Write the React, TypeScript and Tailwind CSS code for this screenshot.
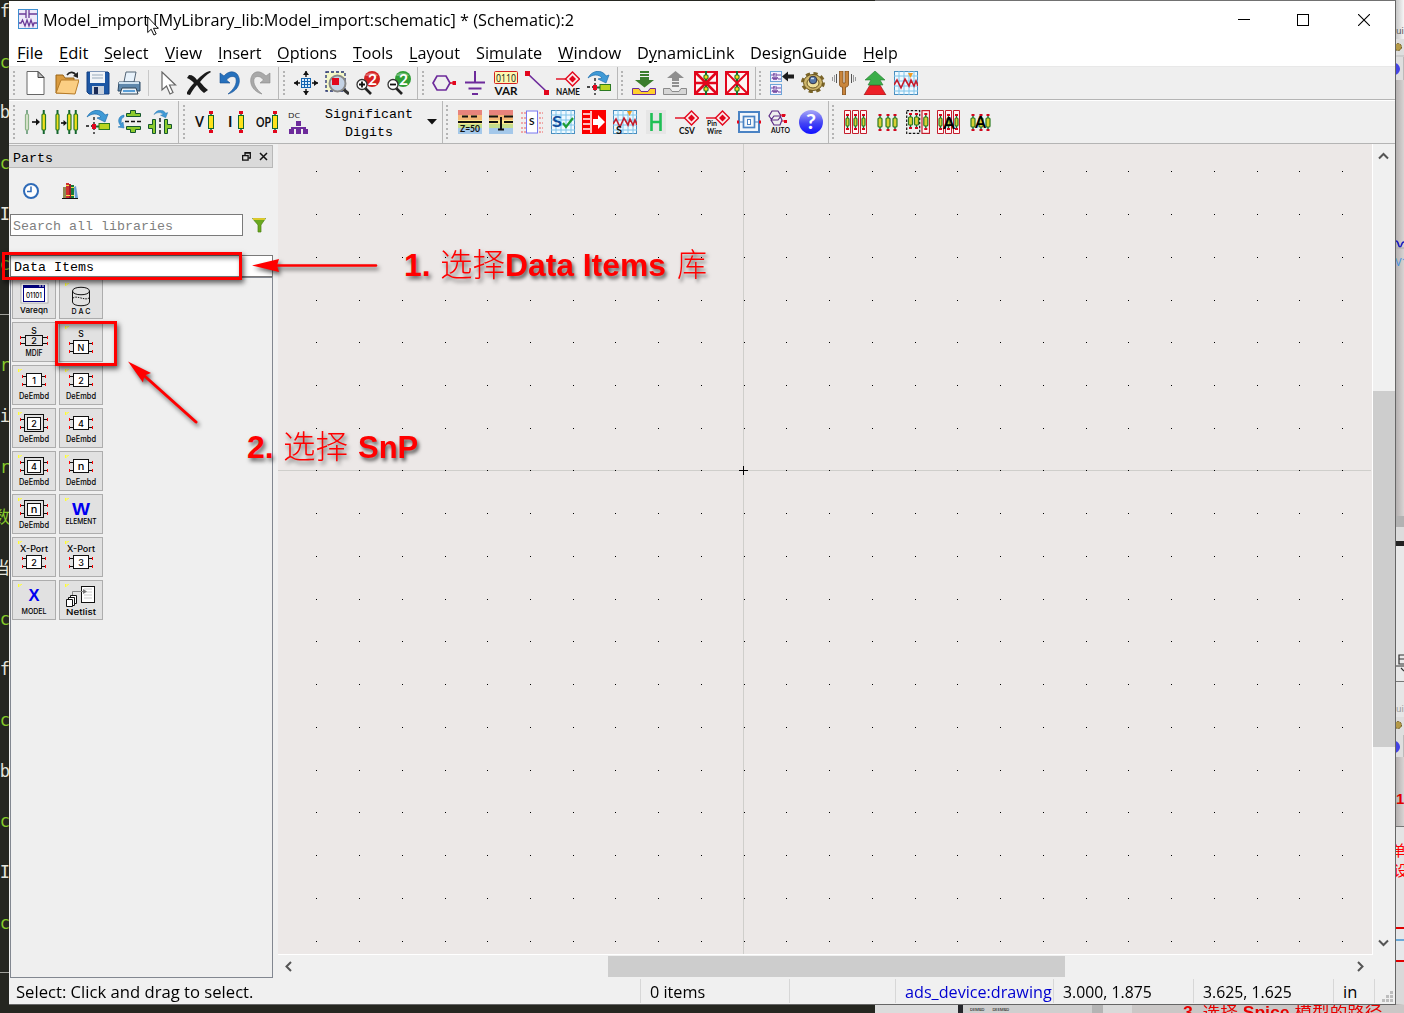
import React, { useLayoutEffect, useRef, useState } from "react";

/* Single-line text squeezed horizontally to an exact width. */
function Fit({ w, className = "", children }: { w: number; className?: string; children: React.ReactNode }) {
  const ref = useRef<HTMLSpanElement>(null);
  const [k, setK] = useState(1);
  useLayoutEffect(() => {
    if (ref.current) setK(w / ref.current.offsetWidth);
  }, [w]);
  return (
    <span className={"block shrink-0 whitespace-nowrap " + className} style={{ width: w }}>
      <span ref={ref} className="inline-block origin-left" style={{ transform: `scaleX(${k})` }}>
        {children}
      </span>
    </span>
  );
}

function Ico({ children, w = 24, h = 24, className = "" }: { children: React.ReactNode; w?: number; h?: number; className?: string }) {
  return (
    <svg width={w} height={h} viewBox={`0 0 ${w} ${h}`} className={"block shrink-0 " + className}>
      {children}
    </svg>
  );
}

function Grip({ n, className = "" }: { n: number; className?: string }) {
  return (
    <span className={"flex shrink-0 flex-col justify-between " + className}>
      {Array.from({ length: n }, (_, i) => (
        <i key={i} className="block size-[2px] bg-[#b4b4b4]" />
      ))}
    </span>
  );
}

/* Resistor body with leads, red pins optional. */
function Res({ x, y = 0, h = 24, w = 5, red = false, fade = false }: { x: number; y?: number; h?: number; w?: number; red?: boolean; fade?: boolean }) {
  const c = x + w / 2;
  return (
    <g opacity={fade ? 0.5 : 1}>
      <path d={`M${c} ${y}V${y + h}`} stroke="#14662e" strokeWidth={red ? 1.4 : 2} />
      {red && <path d={`M${c - 1.5} ${y + 1}h3M${c - 1.5} ${y + h - 1}h3`} stroke="#d2061c" strokeWidth="2" />}
      <rect x={x + 0.5} y={y + 4} width={w - 1} height={h - 8} rx="1" fill={fade ? "#c8dcb0" : red ? "#d8d032" : "#f2e01a"} stroke="#2b7a22" strokeWidth="1.2" />
    </g>
  );
}

/* Larger pinned resistor used beside a letter. */
function Probe({ x }: { x: number }) {
  return (
    <>
      <path d={`M${x + 3} 2V22`} stroke="#14662e" strokeWidth="1.500" />
      <path d={`M${x + 1} 2.500h4M${x + 1} 21.500h4`} stroke="#e2061c" strokeWidth="3" />
      <rect x={x + 0.5} y={5.500} width="5" height="13" fill="#ffe21a" stroke="#14662e" />
    </>
  );
}

const Arc = ({ dx = 0, dy = 0, s = 1 }: { dx?: number; dy?: number; s?: number }) => (
  <g transform={`translate(${dx} ${dy}) scale(${s})`}>
    <path d="M0 7C4-1 14-2 18 5l3-1-3 8-8-4 4-1C11 3 5 3 0 7z" fill="#3f9ad6" stroke="#1f6fae" strokeWidth=".7" />
  </g>
);

const Grid = () => (
  <>
    <rect x=".5" y=".5" width="23" height="23" fill="#eef9ff" stroke="#4a8fc0" />
    <path d="M5 0V24M10 0V24M15 0V24M20 0V24M0 5H24M0 10H24M0 15H24M0 20H24" stroke="#7fc4ea" strokeWidth="1" />
  </>
);

const Move = () => (
  <>
    <Arc dx={1} />
    <path d="M8 7V24M0 16H6" stroke="#111" strokeWidth="1.3" strokeDasharray="3 2" />
    <rect x="6" y="14" width="4" height="5" fill="#e2061c" />
    <path d="M10 16.500H13" stroke="#14662e" strokeWidth="2" />
    <rect x="13" y="13.500" width="10.500" height="6" fill="#b9d520" stroke="#2b7a22" />
  </>
);

const Diamond = () => (
  <>
    <path d="M0 8H13" stroke="#e2061c" strokeWidth="1.4" />
    <path d="M16.500 1l7 7-7 7-7-7z" fill="#fbe9e9" stroke="#e2061c" strokeWidth="1.4" />
    <path d="M16.500 4.500l3.500 3.500-3.500 3.500-3.500-3.500z" fill="#e2061c" />
  </>
);

const Sheet = ({ y }: { y: number }) => (
  <g transform={`translate(0 ${y})`}>
    <rect x=".5" y=".5" width="11" height="10" fill="#f4f0ff" stroke="#6fa6d8" />
    <path d="M1 4h3V2M4 2v4M6 2v4M6 4h5M2 8l1-2 1 3 1-3 1 3 1-3 1 2h3" fill="none" stroke="#6a3a98" strokeWidth=".9" />
  </g>
);

const Wave = () => <path d="M0 14l3-5 4 8 4-9 4 7 2-6 3 6 2-5 2 5" fill="none" stroke="#c51c2c" strokeWidth="1.6" />;

const Bars = () => (
  <>
    <rect width="24" height="6" fill="#e8837c" />
    <rect y="5" width="24" height="5" fill="#f5b877" />
    <rect y="10" width="24" height="4" fill="#fbe98c" />
    <rect y="14" width="24" height="4" fill="#c5de8c" />
    <rect y="18" width="24" height="6" fill="#a4c8ea" />
  </>
);

const T = ({ x, y, s, children, fill = "#111", w, anchor = "start", bold = false }: { x: number; y: number; s: number; children: string; fill?: string; w?: number; anchor?: "start" | "middle"; bold?: boolean }) => (
  <text x={x} y={y} fontSize={s} fill={fill} textLength={w} lengthAdjust="spacingAndGlyphs" textAnchor={anchor} className={bold ? "font-['Lato'] font-bold" : "font-['Open_Sans'] font-medium"}>
    {children}
  </text>
);

const Lens = ({ c, d, sign }: { c: string; d: string; sign: string }) => (
  <>
    <circle cx="16" cy="8" r="8" fill={c} />
    <path d="M9 5a7 5 0 0 1 13 0z" fill="#fff" opacity=".3" />
    <T x={12} y={13.500} s={15} w={9} fill="#fff" bold>{d}</T>
    <path d="M9 17l6 6" stroke="#222" strokeWidth="2.600" />
    <circle cx="6" cy="13.500" r="5" fill="#fff" stroke="#333" strokeWidth="1.300" />
    <path d={sign} stroke="#111" strokeWidth="1.800" />
  </>
);

const Cross = ({ mid }: { mid: boolean }) => (
  <>
    <rect x="1" y="1" width="22" height="22" fill="#fdf5f5" stroke="#e2061c" strokeWidth="2" />
    <Res x={9.5} y={0} h={12} />
    <Res x={9.5} y={12} h={12} />
    <path d={mid ? "M1 1L23 23M23 1L1 23M0 12H24" : "M1 1L23 23M23 1L1 23"} stroke="#e2061c" strokeWidth={mid ? 2.6 : 2} />
  </>
);

const Trio = () => (
  <>
    <Res x={2.500} y={4} h={17} red />
    <Res x={10.500} y={4} h={17} red />
    <Res x={17.500} y={4} h={17} red />
  </>
);

const Boxes3 = () => (
  <>
    <path d="M.500 .500h6v23h-6zM8.500 .500h6v23h-6zM16.500 .500h6v23h-6z" fill="#fff4f4" stroke="#c51c2c" strokeWidth="1" />
    <Res x={1.500} y={4} h={16} w={4} red />
    <Res x={9.500} y={4} h={16} w={4} red />
    <Res x={17.500} y={4} h={16} w={4} red />
  </>
);

function ToolbarTop() {
  const sec = "flex h-full shrink-0 items-center gap-[7px] border-r border-[#b8b8b8]";
  return (
    <div className="flex h-[33px] shrink-0 border-b border-[#b4b4b4] bg-[#efefef]">
      <div className={sec + " w-[270px] pl-[4px]"}>
        <Grip n={6} className="mr-[2px] h-[25px]" />
        <Ico>
          <path d="M3 .500h11l6 6v17H3z" fill="#fff" stroke="#666" />
          <path d="M14 .500l6 6h-6z" fill="#bbb" stroke="#444" />
        </Ico>
        <Ico>
          <path d="M1 22V4h7l2 3h9v15z" fill="#d99a3e" stroke="#9a6416" />
          <path d="M1 22L6 9h18l-4 14z" fill="#fbce83" stroke="#b67b28" />
          <path d="M12 4c3-4 7-3 9 0" fill="none" stroke="#222" strokeWidth="1.600" />
          <path d="M23 1v6l-5-2z" fill="#222" />
        </Ico>
        <Ico>
          <path d="M1 1h21l1 1v21H3l-2-2z" fill="#1c57a5" stroke="#123f80" />
          <rect x="4" y="1" width="15" height="11" fill="#f1f4f8" />
          <path d="M6 4h11M6 7h11" stroke="#9ab" />
          <rect x="6" y="15" width="12" height="8" fill="#c8d0dc" />
          <rect x="8" y="16" width="4" height="7" fill="#1a2a55" />
        </Ico>
        <Ico>
          <path d="M7 11L9 1h10l-2 10z" fill="#e8f2fb" stroke="#567" />
          <path d="M2 11h21v9H1z" fill="#5f88ac" stroke="#2d4a66" />
          <path d="M2 12h20" stroke="#cfe2f0" strokeWidth="2" />
          <path d="M5 17h14l2 6H3z" fill="#e6f0f8" stroke="#345" />
          <path d="M6 20h12" stroke="#5a9fd8" strokeWidth="2" />
        </Ico>
        <i className="h-[26px] w-px bg-[#c8c8c8]" />
        <Ico>
          <path d="M6 1v18l4.500-4 3.500 8 3-1.500-3.500-7.500h6z" fill="#fff" stroke="#666" strokeWidth="1.200" />
        </Ico>
        <Ico>
          <path d="M2 4c4 0 6 2 8 5 4-4 8-8 13-9l1 1c-5 3-8 6-11 10 3 3 5 6 8 8l-4 3c-3-2-5-5-7-8-3 3-5 6-7 10l-4-1c2-4 5-8 8-11-2-2-4-4-7-5z" fill="#1a1a1a" />
        </Ico>
        <Ico>
          <path d="M2 2v10h10L8.500 9C12 4 18 5 18 8c1 5-2 10-8 15 11-3 14-14 9-20-4-4-10-2-13 2z" fill="#2671bd" stroke="#164f90" strokeWidth=".6" />
        </Ico>
        <Ico>
          <path d="M21 2v10H11l3.500-3C11 4 6 5 5 8c-1 5 2 10 8 15C2 20-1 9 4 3c4-4 9-2 13 2z" fill="#a9a9a9" stroke="#8a8a8a" strokeWidth=".6" />
        </Ico>
      </div>
      <div className={sec + " w-[139px] pl-[4px]"}>
        <Grip n={6} className="mr-[2px] h-[25px]" />
        <Ico>
          <rect x="7.500" y="7.500" width="9" height="9" fill="#d8ecfb" stroke="#1464b0" />
          <path d="M10.500 7v10M13.500 7v10M7 10.500h10M7 13.500h10" stroke="#1464b0" />
          <path d="M12 0v6M12 18v6M0 12h6M18 12h6" stroke="#111" strokeWidth="1.400" />
          <path d="M12 0l3 4H9zM12 24l3-4H9zM0 12l4-3v6zM24 12l-4-3v6z" fill="#111" />
        </Ico>
        <Ico>
          <rect x="1" y="1" width="19" height="19" fill="#f4f7c8" stroke="#22306e" strokeDasharray="3 2" strokeWidth="1.300" />
          <path d="M18 18l6 5" stroke="#333" strokeWidth="3" />
          <circle cx="12.500" cy="12.500" r="8" fill="#c4d2e4" stroke="#888" strokeWidth="2" />
          <path d="M14 14V7H7V14z" fill="#e2061c" />
        </Ico>
        <Ico><Lens c="#d42020" d="2" sign="M3 13.500h6M6 10.500v6" /></Ico>
        <Ico><Lens c="#2f9e35" d="2" sign="M3 13.500h6" /></Ico>
      </div>
      <div className={sec + " w-[200px] pl-[4px]"}>
        <Grip n={6} className="mr-px h-[25px]" />
        <Ico>
          <path d="M5 5h9l4 7-4 7H5L1 12z" fill="none" stroke="#6d2b9b" strokeWidth="1.700" />
          <path d="M18 12h4" stroke="#e2061c" strokeWidth="1.500" />
          <rect x="20.500" y="10" width="3.500" height="4" fill="#e2061c" />
        </Ico>
        <Ico>
          <path d="M12 0v11M2 11.500h20M5.500 17.500h13M9 23h6" stroke="#6d2b9b" strokeWidth="2" />
        </Ico>
        <Ico>
          <rect x=".5" y=".5" width="23" height="12" rx="1" fill="#fdf8b0" stroke="#d42020" />
          <T x={2} y={10.500} s={10.500} w={20}>0110</T>
          <T x={0.500} y={23.500} s={11.500} w={23} bold>VAR</T>
        </Ico>
        <Ico>
          <path d="M3 3L22 21" stroke="#6d2b9b" strokeWidth="1.700" />
          <path d="M0 0h5v5H0zM19 19h5v5h-5z" fill="#e2061c" />
        </Ico>
        <Ico>
          <Diamond />
          <T x={0} y={24} s={9} w={24} bold>NAME</T>
        </Ico>
        <Ico><Move /></Ico>
      </div>
      <div className={sec + " w-[138px] pl-[3px]"}>
        <Grip n={6} className="mr-[2px] h-[25px]" />
        <Ico>
          <path d="M8 0h9v2H8zM8 3h9v2H8zM8 6h9v3h5l-9.500 7.500L3 9h5z" fill="#3a7d2c" />
          <path d="M.500 17.500H7l2 3h7l2-3h5.500v6H.500z" fill="#ffcf2e" stroke="#6d2b9b" />
        </Ico>
        <Ico>
          <path d="M9 16h7v-2H9zM9 13h7v-2H9zM9 10V7H4l8.500-7L21 7h-5v3z" fill="#8f8f8f" />
          <path d="M.500 17.500H7l2 3h7l2-3h5.500v6H.500z" fill="#d6d6d6" stroke="#8a8a8a" />
        </Ico>
        <Ico><Cross mid /></Ico>
        <Ico><Cross mid={false} /></Ico>
      </div>
      <div className="flex items-center gap-[7px] pl-[3px]">
        <Grip n={6} className="mr-[2px] h-[25px]" />
        <Ico>
          <Sheet y={0} />
          <Sheet y={13} />
          <path d="M12 5.500l6-5v3h6v4h-6v3z" fill="#1c1c1c" />
        </Ico>
        <Ico>
          <ellipse cx="12" cy="11.500" rx="10" ry="8.500" fill="none" stroke="#7a6428" strokeWidth="4" strokeDasharray="4 3.300" />
          <ellipse cx="12" cy="11.500" rx="9.500" ry="8" fill="#cdb56a" stroke="#6b5720" />
          <ellipse cx="12" cy="12" rx="6" ry="5" fill="#efe09a" stroke="#6b5720" />
          <circle cx="12" cy="9" r="3.800" fill="#5577a8" stroke="#334" />
          <path d="M10 7.500h3" stroke="#cde" strokeWidth="1.500" />
        </Ico>
        <Ico>
          <path d="M7.500 0v13c0 3 2 3 3 3v8h3v-8c1 0 3 0 3-3V0h-3.500v12h-2V0z" fill="#c9853c" stroke="#7d4b16" strokeWidth=".8" />
          <path d="M4.500 3v9M19.500 3v9" stroke="#555" /><path d="M2.500 4v7M21.500 4v7M.500 6v4M23.500 6v4" stroke="#999" />
        </Ico>
        <Ico>
          <path d="M1 24L7 14h10l6 10z" fill="#ec2027" stroke="#8b1a1a" strokeWidth=".6" />
          <path d="M12 0l10 9h-5l3 5H5l3-5H2z" fill="#3bae49" stroke="#257a30" strokeWidth=".6" />
        </Ico>
        <Ico>
          <Grid />
          <Wave />
          <path d="M14 2h5l-2.500 5z" fill="#f39a1d" />
        </Ico>
      </div>
    </div>
  );
}

function ToolbarBottom() {
  const sec = "flex h-full shrink-0 items-center gap-[7px] border-r border-[#b8b8b8]";
  return (
    <div className="flex h-[44px] shrink-0 border-b border-t border-b-[#b4b4b4] border-t-white bg-[#efefef]">
      <div className={sec + " w-[170px] pl-[4px]"}>
        <Grip n={8} className="mr-[2px] h-[35px]" />
        <Ico>
          <Res x={1} w={4} fade /><Res x={17.500} w={4.500} />
          <path d="M8 12h6" stroke="#111" strokeWidth="1.600" /><path d="M12 8.500l4 3.500-4 3.500z" fill="#111" />
        </Ico>
        <Ico>
          <Res x={0.500} w={4} /><Res x={12} w={4.500} /><Res x={18.500} w={4.500} />
          <path d="M6 13h4" stroke="#111" strokeWidth="1.600" /><path d="M8.500 10l3.500 3-3.500 3z" fill="#111" />
        </Ico>
        <Ico><Move /></Ico>
        <Ico>
          <path d="M7 5C1 6 0 12 4 16l-3 1 6 1-1-6-1.500 2C4 11 4 8 7 7z" fill="#3f9ad6" stroke="#1f6fae" strokeWidth=".5" />
          <path d="M8 11.500h16" stroke="#111" strokeWidth="1.400" strokeDasharray="4 2" />
          <path d="M9.500 3.500h4V.500h5v3h5v3h-14zM9.500 16.500h14v3h-5v3h-5v-3h-4z" fill="#8ccb2c" stroke="#14562e" />
        </Ico>
        <Ico>
          <Arc dx={6} dy={0} s={0.65} />
          <path d="M12 8V24" stroke="#111" strokeWidth="1.400" strokeDasharray="4 2" />
          <path d="M4.500 9.500h3v14h-3v-5H.500v-4h4zM19.500 9.500h-3v14h3v-5h4v-4h-4z" fill="#8ccb2c" stroke="#14562e" />
        </Ico>
      </div>
      <div className={sec + " w-[264px] pl-[4px]"}>
        <Grip n={8} className="mr-[2px] h-[35px]" />
        <Ico><T x={1} y={17} s={15} w={9} bold>V</T><Probe x={14} /></Ico>
        <Ico><T x={3} y={17} s={15} bold>I</T><Probe x={13} /></Ico>
        <Ico><T x={0} y={17} s={13} w={15} bold>OP</T><Probe x={16} /></Ico>
        <Ico>
          <T x={1} y={8} s={8} w={12}>DC</T>
          <path d="M9 11h5v5H9zM2 19h5v5H2zM9 19h5v5H9zM16 19h5v5h-5zM4 17h15v2H4z" fill="#6d2b9b" />
        </Ico>
        <div className="flex grow items-center justify-between pr-[5px]">
          <div className="w-[102px] pt-[3px] text-center font-['Liberation_Mono',monospace] text-[13.330px] leading-[17.500px]">Significant Digits</div>
          <Ico w={10} h={6}><path d="M0 0h10L5 5.500z" fill="#111" /></Ico>
        </div>
      </div>
      <div className={sec + " w-[386px] pl-[3px]"}>
        <Grip n={8} className="mr-[3px] h-[35px]" />
        <Ico>
          <Bars /><path d="M4 6.500h6M13 6.500h6M0 12h24" stroke="#111" strokeWidth="2" />
          <T x={2} y={22} s={9} w={20} bold>Z=50</T>
        </Ico>
        <Ico>
          <Bars /><path d="M0 6.500h9M0 12h9M15 12h9M15 6.500h9M9 19.500h6" stroke="#111" strokeWidth="1.800" /><path d="M12 7v12" stroke="#111" strokeWidth="2" />
        </Ico>
        <Ico>
          <path d="M1 3h22M1 8h22M1 13h22M1 18h22M1 22h22" stroke="#f06060" strokeWidth="1.200" strokeDasharray="2 1" />
          <rect x="6.500" y="1" width="11" height="22" fill="#fff" stroke="#7878f0" />
          <T x={9} y={15} s={10} bold>S</T>
        </Ico>
        <Ico>
          <Grid /><T x={1} y={17} s={15} w={10} fill="#124f9c" bold>S</T>
          <path d="M12 13l3 4 7-9" fill="none" stroke="#1c9e35" strokeWidth="2.200" />
        </Ico>
        <Ico>
          <rect width="24" height="24" fill="#fb0000" />
          <path d="M1 4h7M1 9h7M1 14h7M1 19h7M9 1v22" stroke="#fff" strokeWidth="1.500" />
          <path d="M11 9h5V5l7 7-7 7v-4h-5z" fill="#fff" />
        </Ico>
        <Ico>
          <Grid /><Wave /><path d="M14 1h5l-2.500 5z" fill="#f39a1d" /><T x={3} y={23.500} s={11} bold>S</T>
        </Ico>
        <Ico>
          <rect x="2" y="0" width="20" height="24" fill="#e6e6e6" />
          <path d="M7.500 3v18M16.500 3v18M7.500 12h9" stroke="#1fbf55" strokeWidth="2.600" />
        </Ico>
        <Ico><Diamond /><T x={4} y={23.500} s={8.500} w={16} bold>CSV</T></Ico>
        <Ico><Diamond /><T x={1} y={16} s={7.500} w={10} bold>Pin</T><T x={1} y={23.500} s={7.500} w={15} bold>Wire</T></Ico>
        <Ico>
          <rect x="2" y="2" width="20" height="20" fill="#f2f6fb" stroke="#4a83c4" strokeWidth="2" />
          <rect x="6.500" y="6.500" width="11" height="11" fill="none" stroke="#4a83c4" strokeWidth="1.700" />
          <rect x="10.500" y="9.500" width="3" height="5" fill="#fff" stroke="#4a83c4" />
          <path d="M0 12h2M22 12h2" stroke="#e2061c" strokeWidth="3" /><path d="M2 12h4M18 12h4" stroke="#4a83c4" />
        </Ico>
        <Ico>
          <path d="M4 1h6l3 5-3 4H4L1 6zM6 6h6l2 4-2 5H6l-3-5z" fill="none" stroke="#5c2b86" strokeWidth="1.200" />
          <path d="M12 5h6M14 11h5" stroke="#e2061c" strokeWidth="1.200" /><path d="M14 4h3v3h-3zM16 10h3v3h-3z" fill="#e2061c" />
          <T x={3} y={22.500} s={7.500} w={19} bold>AUTO</T>
        </Ico>
        <Ico>
          <defs>
            <linearGradient id="help" x1="0" y1="0" x2="0" y2="1"><stop offset="0" stopColor="#a8a8f8" /><stop offset=".55" stopColor="#4444f4" /><stop offset="1" stopColor="#1010ff" /></linearGradient>
          </defs>
          <circle cx="12" cy="12" r="12" fill="url(#help)" />
          <T x={7} y={19} s={20} w={10} fill="#fff" bold>?</T>
        </Ico>
      </div>
      <div className="flex items-center gap-[7px] pl-[3px]">
        <Grip n={8} className="mr-[3px] h-[35px]" />
        <Ico><Boxes3 /></Ico>
        <Ico><Trio /></Ico>
        <Ico>
          <rect x=".7" y=".7" width="13" height="22.600" fill="none" stroke="#111" strokeWidth="1.200" strokeDasharray="2.500 1.500" />
          <rect x="16" y=".6" width="7.500" height="22.800" fill="#fff4f4" stroke="#c51c2c" strokeWidth="1.200" />
          <Res x={2} y={3} h={16} red /><Res x={8} y={3} h={16} red /><Res x={17.300} y={3} h={17} red />
        </Ico>
        <Ico><Boxes3 /><T x={6} y={19} s={17} w={12} fill="#000" bold>A</T></Ico>
        <Ico><Trio /><T x={7} y={18} s={17} w={11} fill="#000" bold>A</T></Ico>
      </div>
    </div>
  );
}

const P = ({ x = 16, y, children, s = 8.5, fill = "#000", bold = false, w }: { x?: number; y: number; children: string; s?: number; fill?: string; bold?: boolean; w?: number }) => (
  <text x={x} y={y} fontSize={s} fill={fill} textAnchor="middle" textLength={w} lengthAdjust="spacingAndGlyphs" className={bold ? "font-['Liberation_Sans'] font-bold" : "font-['Inter'] font-medium"}>
    {children}
  </text>
);

type Kind = "plain" | "dbl" | "wide";

function Box({ y, n, kind = "plain" }: { y: number; n: string; kind?: Kind }) {
  const l = kind === "plain" ? 4.5 : 2.5;
  const r = kind === "plain" ? 27.5 : 29.5;
  const a = kind === "wide" ? 2.5 : 3.5;
  const b = kind === "wide" ? 8.5 : 11.5;
  return (
    <>
      <path d={`M${l} ${y + a}H${r}M${l} ${y + b}H${r}`} stroke="#111" />
      <path d={`M${l} ${y + a - 1.5}v3M${l} ${y + b - 1.5}v3M${r} ${y + a - 1.5}v3M${r} ${y + b - 1.5}v3`} stroke="#f00" />
      {kind === "dbl" && <rect x="6.500" y={y - 1.5} width="19" height="17" fill="#e1e1e1" stroke="#111" />}
      {kind === "dbl" && <rect x="9.500" y={y + 1.5} width="13" height="12" fill="#fff" stroke="#111" />}
      {kind === "plain" && <rect x="8.500" y={y + 0.5} width="15" height="13" fill="#fff" stroke="#111" />}
      {kind === "wide" && <rect x="7.500" y={y + 0.5} width="17" height="10" fill="#e1e1e1" stroke="#111" />}
      <P y={kind === "wide" ? y + 8.5 : y + 10.5} s={n === "n" ? 11 : 9}>{n}</P>
    </>
  );
}

const Embd = ({ n, kind = "plain" }: { n: string; kind?: Kind }) => (
  <>
    <Box y={4} n={n} kind={kind} />
    <P y={29.500} w={30}>DeEmbd</P>
  </>
);

const parts: { mark: boolean; art: React.ReactNode }[] = [
  {
    mark: false,
    art: (
      <>
        <rect x="3" y="0" width="27" height="20" fill="#fafafa" stroke="#999" strokeWidth=".7" />
        <rect x="5.500" y="2.500" width="21" height="16" fill="#fff" stroke="#000080" />
        <path d="M5 3.500h22" stroke="#000080" strokeWidth="3" /><path d="M21 3h2M24 3h2" stroke="#fff" />
        <P y={14.500} s={7.500} w={16}>01101</P>
        <P y={30} s={8} w={28}>Vareqn</P>
      </>
    ),
  },
  {
    mark: true,
    art: (
      <>
        <path d="M7.500 8v11c0 5 17 5 17 0V8M7.500 8c0-5 17-5 17 0s-17 5-17 0" fill="none" stroke="#111" />
        <path d="M8 15c4-3 12 3 16 0" fill="none" stroke="#111" strokeDasharray="1.500 1" />
        <P y={31} s={8} w={19}>D A C</P>
      </>
    ),
  },
  { mark: false, art: <><P y={8}>S</P><Box y={9} n="2" kind="wide" /><P y={30} w={17}>MDIF</P></> },
  { mark: true, art: <><P y={11}>S</P><Box y={14} n="N" /></> },
  { mark: true, art: <Embd n="1" /> },
  { mark: true, art: <Embd n="2" /> },
  { mark: true, art: <Embd n="2" kind="dbl" /> },
  { mark: true, art: <Embd n="4" /> },
  { mark: true, art: <Embd n="4" kind="dbl" /> },
  { mark: true, art: <Embd n="n" /> },
  { mark: true, art: <Embd n="n" kind="dbl" /> },
  { mark: true, art: <><P y={17} s={16} fill="#0000f0" bold w={18}>W</P><P y={26} s={7} w={31}>ELEMENT</P></> },
  { mark: true, art: <><P y={11} w={28}>X-Port</P><Box y={14} n="2" /></> },
  { mark: true, art: <><P y={11} w={28}>X-Port</P><Box y={14} n="3" /></> },
  { mark: true, art: <><P y={17} s={16} fill="#0000f0" bold w={11}>X</P><P y={29.500} s={8} w={25}>MODEL</P></> },
  {
    mark: true,
    art: (
      <>
        <rect x="16.500" y="2.500" width="13" height="16" fill="#fff" stroke="#111" />
        <path d="M19 5h8M19 8h8M19 11h8M19 14h8" stroke="#ccc" />
        <path d="M7.500 11V7.500H19" fill="none" stroke="#888" /><path d="M18 5l4 2.500-4 2.500z" fill="#777" />
        <path d="M5.500 11.500h6v8h-6z" fill="#fff" stroke="#111" />
        <path d="M3.500 13.500h6v8h-6z" fill="#fff" stroke="#111" />
        <path d="M1.500 15.500h6v7h-6z" fill="#fff" stroke="#111" />
        <P y={31} s={8} w={30}>Netlist</P>
      </>
    ),
  },
];

function PartsDock() {
  return (
    <div className="flex w-[269px] shrink-0 flex-col pr-[5px] pt-px font-['Liberation_Mono',monospace] text-[13.330px]">
      <div className="flex h-[23px] items-center border border-l-0 border-[#b8b8b8] bg-[#dadada] pl-[4px] pr-[4px]">
        <span className="grow pt-[4px]">Parts</span>
        <Ico w={9} h={9} className="mr-[8px]">
          <path d="M3 3V.750h5.300V6H6.500M2.500 1h6" fill="none" stroke="#111" strokeWidth="1.300" />
          <rect x=".6" y="3.600" width="5.500" height="4.500" fill="none" stroke="#111" strokeWidth="1.300" />
        </Ico>
        <Ico w={9} h={9}><path d="M1 1l7 7M8 1l-7 7" stroke="#111" strokeWidth="1.500" /></Ico>
      </div>
      <div className="flex h-[46px] items-center gap-[23px] pl-[14px]">
        <Ico w={16} h={16}>
          <circle cx="8" cy="8" r="7" fill="#fff" stroke="#2f6bb8" strokeWidth="2" />
          <path d="M8 3.500V8.500H4" fill="none" stroke="#2f6bb8" strokeWidth="1.500" />
        </Ico>
        <Ico w={16} h={16}>
          <path d="M1 4h3v11H1z" fill="#8d8a52" /><path d="M4 0h3v15H4z" fill="#d03030" /><path d="M7 1h2v14H7z" fill="#9c1d2b" />
          <path d="M9 2h3v13H9z" fill="#177a38" /><path d="M12 4l2-1 2 12h-3z" fill="#6b9ed6" />
          <path d="M4 2.500h3M9 4.500h3M4 12.500h4M9 12.500h3" stroke="#f5e048" /><path d="M0 15.500h16" stroke="#111" />
        </Ico>
      </div>
      <div className="flex items-center">
        <div className="ml-px flex h-[22px] w-[233px] items-center border border-[#7a7a7a] bg-white pl-[2px] pt-[3px] text-[#7f7f7f]">Search all libraries</div>
        <Ico w={14} h={16} className="ml-[9px]">
          <path d="M.500 1.500h13L9 8v7H6V8z" fill="#6aa81e" stroke="#4b8212" strokeWidth=".7" /><path d="M1 2h12" stroke="#ffd72e" strokeWidth="1.500" />
        </Ico>
      </div>
      <div className="ml-px mt-[19px] flex h-[22px] items-center border border-[#7a7a7a] bg-white pl-[3px] pt-[4px]">Data Items</div>
      <div className="ml-px h-[701px] border border-[#828790] bg-[#efefef] pl-px pt-px">
        <div className="grid w-[91px] grid-cols-[44px_44px] gap-[3px]">
          {parts.map((p, i) => (
            <div key={i} className="flex h-[40px] items-start justify-center border border-[#adadad] bg-[#e1e1e1] pt-[3px]">
              <Ico w={32} h={32}>
                {p.mark && <path d="M0 .500h4M0 1.500h3M0 2.500h2" stroke="#ffff30" strokeDasharray="1 .600" />}
                {p.art}
              </Ico>
            </div>
          ))}
        </div>
      </div>
    </div>
  );
}

const dots: string[] = [];
for (let i = 0; i < 25; i++) for (let j = 0; j < 19; j++) dots.push(`M${Math.floor(316.8 + 42.74 * i) - 278} ${Math.floor(171.8 + 42.74 * j) - 144}h1v1h-1z`);

function Schematic() {
  return (
    <div className="flex min-w-0 grow flex-col">
      <div className="flex h-[811px]">
        <div className="h-full w-[1095px] border-b border-r border-white bg-[#ece8e7]">
          <Ico w={1094} h={810}>
            <path d="M465.500 0V810M0 326.500H1093" stroke="#cfcecb" />
            <path d={dots.join("")} fill="#000" shapeRendering="crispEdges" />
            <path d="M461 326.500h9M465.500 322v9" stroke="#000" />
          </Ico>
        </div>
        <div className="flex w-[22px] flex-col items-center bg-[#f0f0f0]">
          <Ico w={11} h={8} className="mr-[2px] mt-[8px]"><path d="M1 6.500l4.500-4.500L10 6.500" fill="none" stroke="#555" strokeWidth="2" /></Ico>
          <div className="mt-[231px] h-[356px] w-full bg-[#cdcdcd]" />
          <Ico w={11} h={8} className="mr-[2px] mt-[192px]"><path d="M1 1.500l4.500 4.500L10 1.500" fill="none" stroke="#555" strokeWidth="2" /></Ico>
        </div>
      </div>
      <div className="flex h-[23px] items-center bg-[#f0f0f0] pl-[7px]">
        <Ico w={7} h={11}><path d="M6 1L1.500 5.500 6 10" fill="none" stroke="#555" strokeWidth="2" /></Ico>
        <div className="ml-[316px] mt-px h-[21px] w-[457px] self-start bg-[#cdcdcd]" />
        <Ico w={7} h={11} className="ml-[292px]"><path d="M1 1l4.500 4.500L1 10" fill="none" stroke="#555" strokeWidth="2" /></Ico>
      </div>
    </div>
  );
}

const menus: [string, number, number][] = [
  ["File", 0, 26], ["Edit", 0, 29], ["Select", 0, 45], ["View", 0, 37], ["Insert", 0, 43], ["Options", 0, 60], ["Tools", 0, 40],
  ["Layout", 0, 51], ["Simulate", 2, 66], ["Window", 0, 63], ["DynamicLink", 1, 97], ["DesignGuide", -1, 97], ["Help", 0, 35],
];

const codeColumn: [string, boolean][] = [
  ["f", false], ["c", true], ["b", false], ["c", true], ["I", false], ["c", true], ["", false], ["r", true], ["i", false], ["r", true],
  ["数", true], ["当", false], ["c", true], ["f", false], ["c", true], ["b", false], ["c", true], ["I", false], ["c", true], ["", false],
];

function Desktop() {
  return (
    <div className="absolute inset-0 flex flex-col bg-[#252620]">
      <div className="flex h-[1005px] justify-between">
        <div className="w-[10px] overflow-hidden">
          {codeColumn.map(([c, g], i) => (
            <div key={i} className={"flex h-[50.650px] items-start justify-end font-['DejaVu_Sans_Mono','Noto_Sans_CJK_SC',monospace] text-[17px] leading-[22px] " + (g ? "text-[#86c92a]" : "text-[#e4e4dc]")}>
              {c || <i className="mt-[10px] h-px w-full bg-[#a0a09a]" />}
            </div>
          ))}
        </div>
        <div className="flex w-[529px] flex-col items-end bg-[#717171]">
          <div className="h-full w-[8px] overflow-hidden bg-linear-to-r from-[#b4b0b0] to-[#d8d4d3]">
            <div className="h-[39px] overflow-hidden bg-linear-to-r from-[#c8c8c8] to-[#f6f6f6] pt-[26px] text-[9px] leading-[10px] text-[#555]">uic</div>
            <Ico w={8} h={41} className="bg-[#dedede]">
              <circle cx="2" cy="8" r="3.500" fill="#b59a48" stroke="#6b5720" strokeDasharray="2 1" /><circle cx="-2" cy="30" r="6" fill="#4444e4" /><path d="M7.500 18v23M0 17h8" stroke="#bbb" />
            </Ico>
            <Ico w={8} h={436}>
              <path d="M0 161c3 0 2 6 4 6s1-5 4-5" fill="none" stroke="#1c1cc0" strokeWidth="1.600" /><path d="M0 168h8" stroke="#aaa" />
              <T x={-1} y={186} s={11} fill="#3f8fe0">V1</T>
            </Ico>
            <div className="h-[11px] bg-[#b2b2b2]" />
            <div className="h-[14px] bg-[#dcdcdc]" />
            <div className="h-[5px] bg-[#222]" />
            <Ico w={8} h={136} className="bg-[#e9e9e9]">
              <path d="M8 109H3v9h5M3 113h5M0 120h8M5 122l3 3" fill="none" stroke="#333" strokeWidth="1.200" /><path d="M0 135.500h8" stroke="#777" />
            </Ico>
            <div className="h-[35px] bg-[#e6e6e6] pt-[22px] text-[9px] leading-[10px] text-[#999]">uic</div>
            <Ico w={8} h={40} className="bg-[#dedede]">
              <circle cx="2" cy="8" r="3.500" fill="#b59a48" stroke="#6b5720" strokeDasharray="2 1" /><circle cx="-2" cy="30" r="6" fill="#4444e4" /><path d="M7.500 18v22" stroke="#bbb" />
            </Ico>
            <div className="h-[69px] pt-[32px] font-['Liberation_Sans'] text-[15px] font-bold leading-[20px] text-[#e00000]">1.</div>
            <div className="h-[101px] overflow-hidden border-t border-[#777] bg-[#e4e4e4] pt-[13px] font-['Noto_Sans_CJK_SC'] text-[15px] leading-[20px] text-[#f00]">
              <div className="-ml-[5px]">单</div>
              <div className="-ml-[3px]">设</div>
            </div>
            <div className="h-[35px] border-y-2 border-[#e00000] bg-[#e6e8ea] pt-[10px]"><div className="h-[2px] bg-[#6aa8d8]" /></div>
            <div className="h-[42px] bg-[#d9d9d9]" />
          </div>
        </div>
      </div>
      <div className="flex h-[8px] overflow-hidden pl-[875px]">
        <div className="w-[83px] bg-[#dcdcdc]" />
        <div className="w-[5px] bg-[#25262a]" />
        <div className="flex w-[129px] gap-[8px] bg-[#cfcfcf] pl-[7px] font-['Inter'] text-[4px] leading-[9px]"><span>DEMBD</span><span>DEEMBD</span></div>
        <div className="w-[11px] bg-[#b4b4b4]" />
        <div className="w-[29px] bg-[#dadada]" />
        <div className="grow bg-[#cac7c6] pl-[51px] font-['Liberation_Sans','Noto_Sans_CJK_SC',sans-serif] text-[16px] leading-[15px] text-[#e80000]">
          <Fit w={199}><b>3. </b>选择 <b>Spice </b>模型的路径</Fit>
        </div>
      </div>
    </div>
  );
}

const note = "absolute flex items-center whitespace-pre font-['Liberation_Sans','Noto_Sans_CJK_SC',sans-serif] text-[32px] leading-[40px] text-[#ff0000] [text-shadow:2px_3px_4px_rgba(0,0,0,0.6)]";

function Annotations() {
  return (
    <>
      <div className="absolute left-[2px] top-[252px] h-[28px] w-[240px] border-[3px] border-[#ff0000] shadow-[2px_3px_5px_rgba(0,0,0,0.6),inset_2px_3px_5px_rgba(0,0,0,0.5)]" />
      <div className="absolute left-[55px] top-[321px] h-[45px] w-[62px] border-[3px] border-[#ff0000] shadow-[2px_3px_5px_rgba(0,0,0,0.6),inset_2px_3px_5px_rgba(0,0,0,0.4)]" />
      <Ico w={140} h={30} className="absolute left-[249px] top-[250px] drop-shadow-[2px_3px_2px_rgba(0,0,0,0.6)]">
        <path d="M3 15.500L30 9l-2 6.500 2 6.500z" fill="#f00" /><path d="M26 15.500H127" stroke="#f00" strokeWidth="2.500" strokeLinecap="round" />
      </Ico>
      <Ico w={80} h={75} className="absolute left-[124px] top-[355px] drop-shadow-[2px_3px_2px_rgba(0,0,0,0.6)]">
        <path d="M4 6.500l23 11.500-6.500 2.500L19 27.500z" fill="#f00" /><path d="M20 20.500L72 67" stroke="#f00" strokeWidth="3" strokeLinecap="round" />
      </Ico>
      <div className={note + " left-[404px] top-[245px]"}>
        <Fit w={27} className="mr-[9px] font-bold">1.</Fit><Fit w={65} className="font-light">选择</Fit><Fit w={161} className="font-bold">Data Items</Fit><Fit w={30} className="ml-[11px] font-light">库</Fit>
      </div>
      <div className={note + " left-[247px] top-[427px]"}>
        <Fit w={27} className="mr-[9px] font-bold">2.</Fit><Fit w={65} className="font-light">选择</Fit><Fit w={60} className="ml-[10px] font-bold">SnP</Fit>
      </div>
      <Ico w={12} h={20} className="absolute left-[147px] top-[16px]">
        <path d="M.700 1v15.500l3.500-3.300 2.700 5.800 2.300-1.100-2.700-5.600h4.800z" fill="#fff" stroke="#111" />
      </Ico>
    </>
  );
}

export default function App() {
  const ui = "font-['Open_Sans',sans-serif] text-[16.500px] leading-[22px]";
  const cell = "flex h-[24px] shrink-0 items-center border-l border-[#d7d7d7] ";
  return (
    <div className="relative h-[1013px] w-[1404px] overflow-hidden bg-[#252620] text-black">
      <Desktop />
      <div className="absolute left-[9px] top-px flex h-[1004px] w-[1387px] flex-col border-b border-r border-[#666] bg-[#f0f0f0]">
        <div className={"flex h-[37px] shrink-0 items-center bg-white pl-[9px] " + ui}>
          <Ico w={20} h={20} className="-mt-px">
            <rect x=".5" y=".5" width="19" height="19" fill="#eee9fa" stroke="#3f8fd0" />
            <path d="M1 5h7M8 1v8M11 1v8M11 5h8M1 14h2l1.500-3L7 17l2-6 2 6 2-6 2 6 1-3h3" fill="none" stroke="#6a3a98" strokeWidth="1.300" />
          </Ico>
          <Fit w={531} className="ml-[5px]">Model_import [MyLibrary_lib:Model_import:schematic] * (Schematic):2</Fit>
          <div className="ml-auto flex items-center gap-[48px] pr-[25px] pt-px">
            <Ico w={12} h={12} className="-mr-px -ml-px"><path d="M0 5.500h12" stroke="#000" /></Ico>
            <Ico w={12} h={12}><rect x=".5" y=".5" width="11" height="11" fill="none" stroke="#000" /></Ico>
            <Ico w={12} h={12} className="ml-px"><path d="M0 0l12 12M12 0L0 12" stroke="#000" strokeWidth="1.100" /></Ico>
          </div>
        </div>
        <div className={"flex h-[29px] shrink-0 items-center gap-[16px] border-b border-[#e8e8e8] bg-white pl-[8px] pt-px " + ui}>
          {menus.map(([t, u, w]) => (
            <Fit key={t} w={w}>
              {u < 0 ? t : <>{t.slice(0, u)}<span className="underline decoration-1 underline-offset-[2px]">{t[u]}</span>{t.slice(u + 1)}</>}
            </Fit>
          ))}
        </div>
        <ToolbarTop />
        <ToolbarBottom />
        <div className="flex h-[834px] shrink-0">
          <PartsDock />
          <Schematic />
        </div>
        <div className={"flex h-[26px] shrink-0 items-center " + ui}>
          <div className="w-[631px] pl-[7px] pt-[2px]"><Fit w={237}>Select: Click and drag to select.</Fit></div>
          <div className={cell + "w-[149px] pl-[9px] pt-[2px]"}><Fit w={55}>0 items</Fit></div>
          <div className={cell + "w-[106px]"} />
          <div className={cell + "w-[158px] pl-[9px] pt-[2px] text-[#0000d0]"}><Fit w={147}>ads_device:drawing</Fit></div>
          <div className={cell + "w-[140px] pl-[9px] pt-[2px]"}><Fit w={89}>3.000, 1.875</Fit></div>
          <div className={cell + "w-[140px] pl-[9px] pt-[2px]"}><Fit w={89}>3.625, 1.625</Fit></div>
          <div className={cell + "w-[41px] pl-[9px] pt-[2px]"}><Fit w={14}>in</Fit></div>
          <div className={cell + "grow items-end pl-[7px]"}>
            <Ico w={11} h={11} className="mb-[1px]"><path d="M8 0h3v3h-3zM4 4h3v3H4zM8 4h3v3H8zM0 8h3v3H0zM4 8h3v3H4zM8 8h3v3H8z" fill="#bdbdbd" /></Ico>
          </div>
        </div>
      </div>
      <Annotations />
    </div>
  );
}
